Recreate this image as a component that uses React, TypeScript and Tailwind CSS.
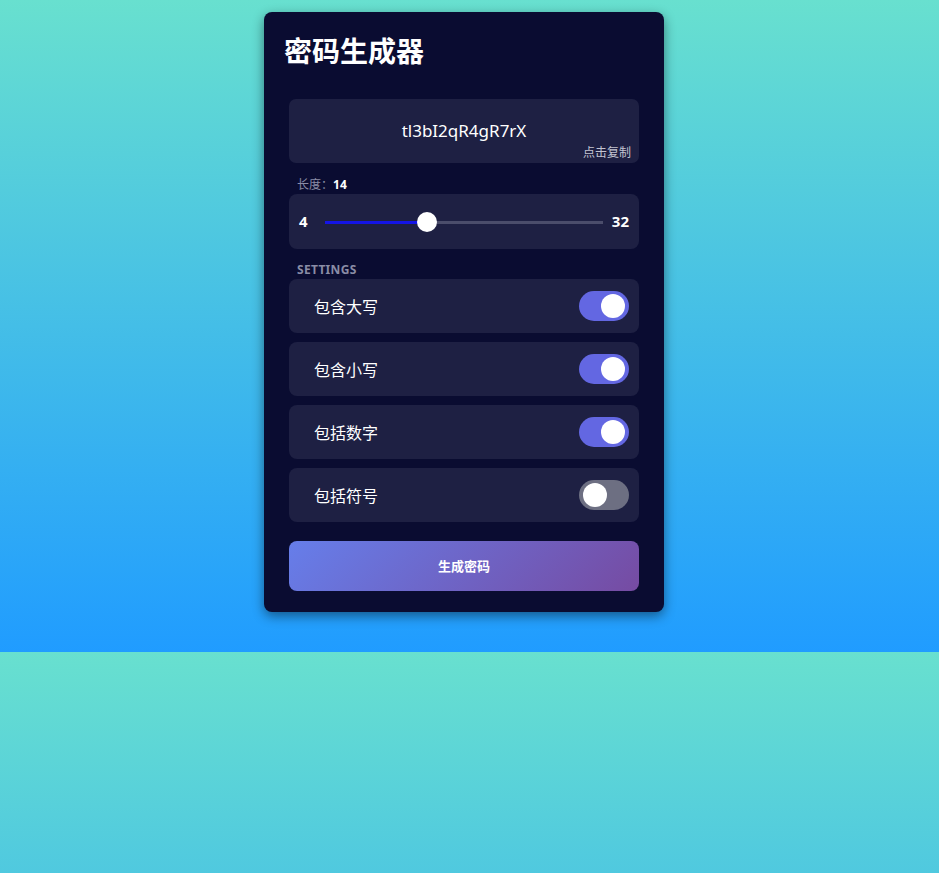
import React from 'react';

const font = { fontFamily: '"Noto Sans", "Noto Sans CJK SC", sans-serif' };

const settings = [
  { label: '包含大写', on: true },
  { label: '包含小写', on: true },
  { label: '包括数字', on: true },
  { label: '包括符号', on: false },
];

function Toggle({ on }: { on: boolean }) {
  return (
    <div
      className={
        'relative h-[30px] w-[50px] rounded-full ' +
        (on ? 'bg-[#6367e2]' : 'bg-[#6d6f82]')
      }
    >
      <span
        className={
          'absolute top-[3px] h-[24px] w-[24px] rounded-full bg-white ' +
          (on ? 'right-[4px]' : 'left-[4px]')
        }
      />
    </div>
  );
}

export default function App() {
  const min = 4;
  const max = 32;
  const length = 14;
  const p = (length - min) / (max - min);
  // thumb centre inside the track, like a native range input
  const thumbLeft = `calc(10px + (100% - 20px) * ${p})`;

  return (
    <div
      className="min-h-[873px] w-full bg-[linear-gradient(to_bottom,#68e0cf,#209cff)] bg-[length:100%_652px] bg-repeat-y"
      style={font}
    >
      <div className="flex h-[652px] w-[928px] justify-center pt-[12px]">
        <div className="h-[600px] w-[400px] rounded-[8px] bg-[#0a0c31] px-[25px] pt-[22px] pb-[21px] shadow-[0_4px_12px_rgba(0,0,0,0.45)]">
          <h1 className="-ml-[5px] h-[34px] text-[28px] font-bold leading-[34px] text-white">
            密码生成器
          </h1>

          <div className="relative mt-[31px] flex h-[64px] items-center justify-center rounded-[7px] bg-[#1e2043]">
            <span className="text-[17px] text-white">tl3bI2qR4gR7rX</span>
            <span className="absolute right-2 bottom-[2px] text-[12px] leading-[16px] text-[#c3c4d2]">
              点击复制
            </span>
          </div>

          <div className="mt-[14px] pl-2 text-[12px] leading-[16px] text-[#8a8ca6]">
            长度：<span className="font-bold text-white">{length}</span>
          </div>

          <div className="mt-[1px] flex h-[55px] items-center rounded-[8px] bg-[#1e2043] px-[10px]">
            <span className="w-[10px] text-[15px] font-bold text-white">{min}</span>
            <div className="relative ml-[16px] mr-[9px] h-[20px] flex-1">
              <div className="absolute inset-x-0 top-[9px] h-[3px] bg-[#4b4d6b]" />
              <div
                className="absolute left-0 top-[9px] h-[3px] bg-[#1414e6]"
                style={{ width: thumbLeft }}
              />
              <div
                className="absolute top-0 h-[20px] w-[20px] -translate-x-1/2 rounded-full bg-white"
                style={{ left: thumbLeft }}
              />
            </div>
            <span className="text-[15px] font-bold text-white">{max}</span>
          </div>

          <div className="mt-[13px] pl-2 text-[12px] font-bold leading-[16px] tracking-[0.3px] text-[#8a8ca6]">
            SETTINGS
          </div>

          <div className="mt-[1px] flex flex-col gap-[9px]">
            {settings.map((s) => (
              <div
                key={s.label}
                className="flex h-[54px] items-center justify-between rounded-[8px] bg-[#1e2043] pl-[25px] pr-[10px]"
              >
                <span className="pt-[2px] text-[16px] text-white">{s.label}</span>
                <Toggle on={s.on} />
              </div>
            ))}
          </div>

          <button className="mt-[19px] flex h-[50px] w-full items-center justify-center rounded-[8px] bg-[linear-gradient(135deg,#667eea,#764ba2)] pt-[2px] text-[13px] font-bold text-white">
            生成密码
          </button>
        </div>
      </div>
    </div>
  );
}
